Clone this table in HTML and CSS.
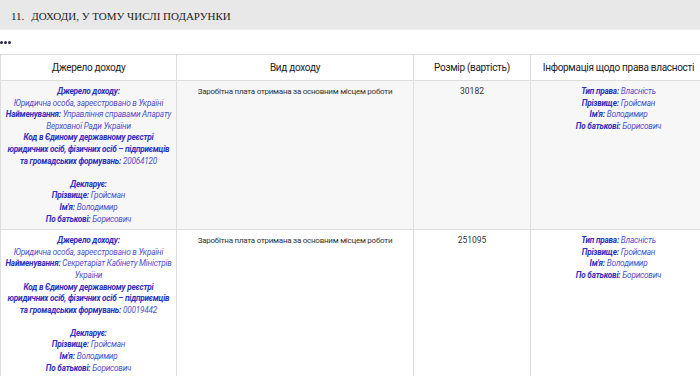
FILE: index.html
```html
<!DOCTYPE html>
<html lang="uk">
<head>
<meta charset="utf-8">
<link rel="stylesheet" href="styles.css">
</head>
<body>
<div class="page">
  <div class="section-title"><span class="num">11.</span>ДОХОДИ, У ТОМУ ЧИСЛІ ПОДАРУНКИ</div>
  <div class="dots"><span class="dot"></span><span class="dot"></span><span class="dot"></span></div>
  <table class="grid">
    <colgroup>
      <col class="c1"><col class="c2"><col class="c3"><col class="c4">
    </colgroup>
    <thead>
      <tr>
        <th>Джерело доходу</th>
        <th>Вид доходу</th>
        <th>Розмір (вартість)</th>
        <th>Інформація щодо права власності</th>
      </tr>
    </thead>
    <tbody>
      <tr class="odd">
        <td class="src">
          <b>Джерело доходу:</b><br>
          Юридична особа, зареєстровано в Україні<br>
          <b>Найменування:</b> Управління справами Апарату Верховної Ради України<br>
          <b>Код в Єдиному державному реєстрі юридичних осіб, фізичних осіб – підприємців та громадських формувань:</b> 20064120<br>
          <br>
          <b>Декларує:</b><br>
          <b>Прізвище:</b> Гройсман<br>
          <b>Ім'я:</b> Володимир<br>
          <b>По батькові:</b> Борисович
        </td>
        <td class="plain">Заробітна плата отримана за основним місцем роботи</td>
        <td class="plain num-cell">30182</td>
        <td class="src">
          <b>Тип права:</b> Власність<br>
          <b>Прізвище:</b> Гройсман<br>
          <b>Ім'я:</b> Володимир<br>
          <b>По батькові:</b> Борисович
        </td>
      </tr>
      <tr>
        <td class="src">
          <b>Джерело доходу:</b><br>
          Юридична особа, зареєстровано в Україні<br>
          <b>Найменування:</b> Секретаріат Кабінету Міністрів України<br>
          <b>Код в Єдиному державному реєстрі юридичних осіб, фізичних осіб – підприємців та громадських формувань:</b> 00019442<br>
          <br>
          <b>Декларує:</b><br>
          <b>Прізвище:</b> Гройсман<br>
          <b>Ім'я:</b> Володимир<br>
          <b>По батькові:</b> Борисович
        </td>
        <td class="plain">Заробітна плата отримана за основним місцем роботи</td>
        <td class="plain num-cell">251095</td>
        <td class="src">
          <b>Тип права:</b> Власність<br>
          <b>Прізвище:</b> Гройсман<br>
          <b>Ім'я:</b> Володимир<br>
          <b>По батькові:</b> Борисович
        </td>
      </tr>
    </tbody>
  </table>
</div>
</body>
</html>
```
FILE: styles.css
```css
html, body {
  margin: 0;
  padding: 0;
  background: #ffffff;
  overflow: hidden;
}
.page {
  width: 700px;
  overflow: hidden;
  font-family: Roboto, "Noto Sans", sans-serif;
  color: #333333;
}
.section-title {
  background: #e8e8e8;
  height: 30px;
  line-height: 33px;
  padding-left: 11px;
  font-family: "Liberation Serif", "DejaVu Serif", serif;
  font-size: 11px;
  color: #222222;
  border-bottom: 1px solid #f0f0f0;
  box-sizing: border-box;
}
.section-title .num {
  margin-right: 7px;
}
.dots {
  height: 24px;
  display: flex;
  align-items: center;
  gap: 1px;
}
.dot {
  width: 3px;
  height: 3px;
  border-radius: 50%;
  background: #2a2a48;
}
.grid {
  width: 706px;
  border-collapse: collapse;
  table-layout: fixed;
}
.c1 { width: 176px; }
.c2 { width: 237px; }
.c3 { width: 117px; }
.c4 { width: 176px; }
.grid th {
  height: 25px;
  font-weight: 400;
  font-size: 10px;
  letter-spacing: -0.3px;
  color: #222222;
  text-align: center;
  border: 1px solid #dddddd;
  padding: 0 2px;
  background: #ffffff;
}
.grid td {
  border: 1px solid #dddddd;
  vertical-align: top;
  text-align: center;
  padding: 5px 3px 4px;
}
.grid tr.odd td {
  background: #f7f7f7;
}
.grid td.src {
  font-style: italic;
  font-size: 8.2px;
  letter-spacing: -0.2px;
  line-height: 11.6px;
  color: #5050cc;
}
.grid td.src b {
  font-weight: 700;
  color: #3030c0;
}
.grid td.plain {
  font-size: 8px;
  letter-spacing: -0.25px;
  line-height: 11.6px;
  color: #333333;
}
.grid td.num-cell {
  font-size: 8.5px;
  letter-spacing: 0;
}
```
